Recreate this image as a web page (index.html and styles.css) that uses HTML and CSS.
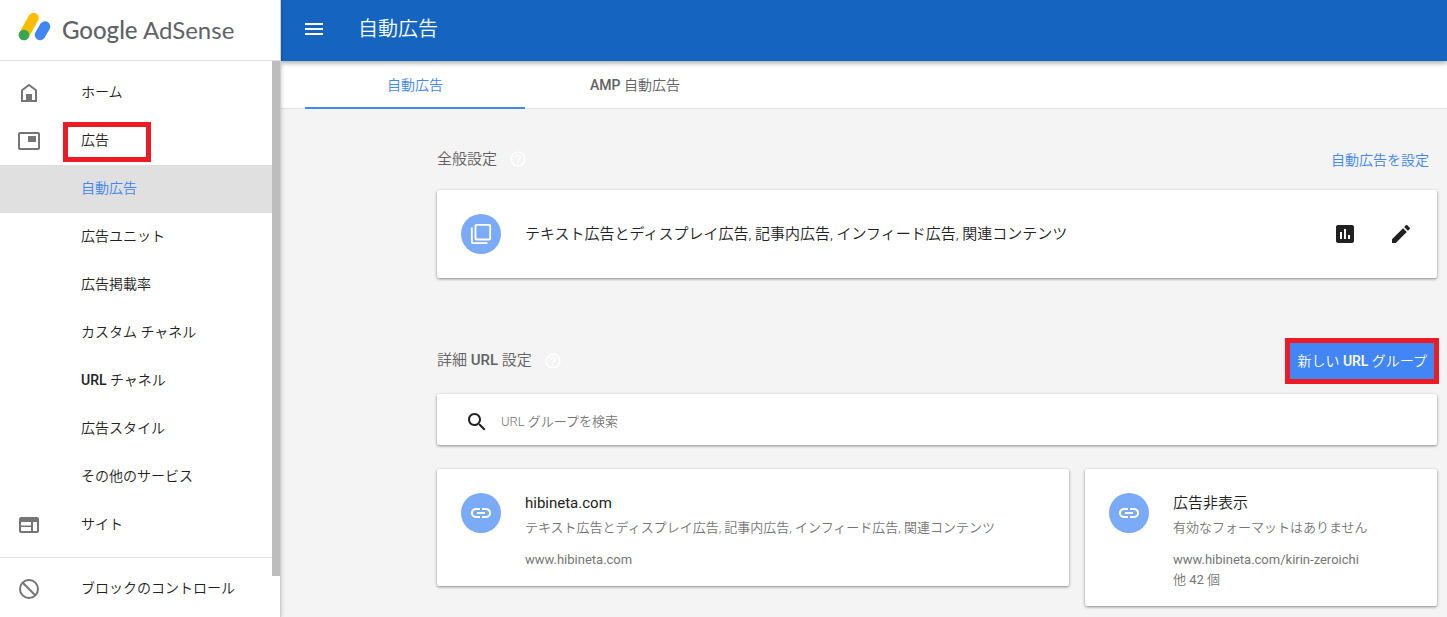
FILE: index.html
```html
<!DOCTYPE html>
<html lang="ja">
<head>
<meta charset="utf-8">
<title>自動広告 - Google AdSense</title>
<link rel="stylesheet" href="styles.css">
</head>
<body>
<svg class="defs" aria-hidden="true">
  <symbol id="help" viewBox="0 0 24 24"><path d="M11 18h2v-2h-2v2zm1-16C6.48 2 2 6.48 2 12s4.48 10 10 10 10-4.48 10-10S17.52 2 12 2zm0 18c-4.41 0-8-3.59-8-8s3.59-8 8-8 8 3.59 8 8-3.59 8-8 8zm0-14c-2.21 0-4 1.79-4 4h2c0-1.1.9-2 2-2s2 .9 2 2c0 2-3 1.75-3 5h2c0-2.25 3-2.5 3-5 0-2.21-1.79-4-4-4z"/></symbol>
  <symbol id="link" viewBox="0 0 24 24"><path d="M3.9 12c0-1.71 1.39-3.1 3.1-3.1h4V7H7c-2.76 0-5 2.24-5 5s2.24 5 5 5h4v-1.9H7c-1.71 0-3.1-1.39-3.1-3.1zM8 13h8v-2H8v2zm9-6h-4v1.9h4c1.71 0 3.1 1.39 3.1 3.1s-1.39 3.1-3.1 3.1h-4V17h4c2.76 0 5-2.24 5-5s-2.24-5-5-5z"/></symbol>
</svg>
<div class="app">
  <aside class="sidebar">
    <div class="brand">
      <svg class="brand-mark" viewBox="0 0 34 32" aria-hidden="true">
        <path d="M7 25L16.500 8" stroke="#fbbc04" stroke-width="10.500" stroke-linecap="round"/>
        <path d="M23 25L28 16.500" stroke="#4285f4" stroke-width="10.500" stroke-linecap="round"/>
        <circle cx="7" cy="25" r="5.300" fill="#34a853"/>
      </svg>
      <span class="brand-name"><b>Google</b> AdSense</span>
    </div>
    <div class="nav-scroll">
      <nav class="nav">
        <a class="nav-item" href="#"><svg class="icon" viewBox="0 0 24 24"><path d="M5 20V9.200L12 4l7 5.200V20z" fill="none" stroke="currentColor" stroke-width="2"/><path d="M9 13h6v8H9z"/></svg><span>ホーム</span></a>
        <a class="nav-item marked" href="#"><svg class="icon" viewBox="0 0 24 24"><rect x="2" y="4" width="20" height="16" rx="1" fill="none" stroke="currentColor" stroke-width="2"/><path d="M11 7h8v6h-8z"/></svg><span>広告</span></a>
        <a class="nav-item sub active" href="#">自動広告</a>
        <a class="nav-item sub" href="#">広告ユニット</a>
        <a class="nav-item sub" href="#">広告掲載率</a>
        <a class="nav-item sub" href="#">カスタム チャネル</a>
        <a class="nav-item sub" href="#"><span><span class="latin">URL</span> チャネル</span></a>
        <a class="nav-item sub" href="#">広告スタイル</a>
        <a class="nav-item sub" href="#">その他のサービス</a>
        <a class="nav-item" href="#"><svg class="icon" viewBox="0 0 24 24"><path fill-rule="evenodd" d="M4 4h16a2 2 0 0 1 2 2v12a2 2 0 0 1-2 2H4a2 2 0 0 1-2-2V6a2 2 0 0 1 2-2zM4 9v3.500h10V9zM4 14v4h10v-4zM16 9v9h4V9z"/></svg><span>サイト</span></a>
        <hr class="divider">
        <a class="nav-item" href="#"><svg class="icon" viewBox="0 0 24 24"><path d="M5.500 5.500l13 13" stroke="currentColor" stroke-width="2"/><circle cx="12" cy="12" r="9" fill="none" stroke="currentColor" stroke-width="2"/></svg><span>ブロックのコントロール</span></a>
      </nav>
      <div class="scroll-track"><div class="scroll-thumb"></div></div>
    </div>
  </aside>
  <div class="main">
    <header class="topbar">
      <button class="icon-btn" type="button" aria-label="メニュー"><svg class="icon" viewBox="0 0 24 24"><path d="M3 18h18v-2H3v2zm0-5h18v-2H3v2zm0-7v2h18V6H3z"/></svg></button>
      <h1 class="page-title">自動広告</h1>
    </header>
    <nav class="tabs">
      <a class="tab active" href="#">自動広告</a>
      <a class="tab" href="#"><span><span class="latin">AMP</span> 自動広告</span></a>
    </nav>
    <main class="content">
      <section>
        <div class="section-head">
          <h2 class="section-title">全般設定</h2>
          <svg class="help"><use href="#help"/></svg>
          <a class="setup-link" href="#">自動広告を設定</a>
        </div>
        <div class="card summary">
          <span class="avatar"><svg class="avatar-copy" viewBox="0 0 24 24"><path d="M3 5H1v16c0 1.100.9 2 2 2h16v-2H3V5zm18-4H7c-1.100 0-2 .9-2 2v14c0 1.100.9 2 2 2h14c1.100 0 2-.9 2-2V3c0-1.100-.9-2-2-2zm0 16H7V3h14v14z"/></svg></span>
          <p class="card-title grow">テキスト広告とディスプレイ広告, 記事内広告, インフィード広告, 関連コンテンツ</p>
          <button class="icon-btn" type="button" aria-label="レポート"><svg class="icon" viewBox="0 0 24 24"><path d="M19 3H5c-1.100 0-2 .9-2 2v14c0 1.100.9 2 2 2h14c1.100 0 2-.9 2-2V5c0-1.100-.9-2-2-2zM9 17H7v-7h2v7zm4 0h-2V7h2v10zm4 0h-2v-4h2v4z"/></svg></button>
          <button class="icon-btn" type="button" aria-label="編集"><svg class="icon" viewBox="0 0 24 24"><path d="M3 17.250V21h3.750L17.810 9.940l-3.750-3.750L3 17.250zM20.710 7.040c.39-.39.39-1.020 0-1.410l-2.340-2.340c-.39-.39-1.020-.39-1.410 0l-1.830 1.830 3.750 3.750 1.830-1.830z"/></svg></button>
        </div>
      </section>
      <section class="url-section">
        <div class="section-head">
          <h2 class="section-title">詳細 <span class="latin">URL</span> 設定</h2>
          <svg class="help"><use href="#help"/></svg>
          <button class="new-group" type="button">新しい <span class="latin">URL</span> グループ</button>
        </div>
        <label class="card search">
          <svg class="icon" viewBox="0 0 24 24" aria-hidden="true"><path d="M15.500 14h-.79l-.28-.27C15.410 12.590 16 11.110 16 9.500 16 5.910 13.090 3 9.500 3S3 5.910 3 9.500 5.910 16 9.500 16c1.610 0 3.090-.59 4.230-1.570l.27.28v.79l5 4.990L20.490 19l-4.990-5zm-6 0C7.010 14 5 11.990 5 9.500S7.010 5 9.500 5 14 7.010 14 9.500 11.990 14 9.500 14z"/></svg>
          <input class="search-input" type="text" placeholder="URL グループを検索" aria-label="URL グループを検索">
        </label>
        <div class="groups">
          <article class="card group">
            <span class="avatar"><svg class="icon"><use href="#link"/></svg></span>
            <div>
              <h3 class="card-title regular">hibineta.com</h3>
              <p class="formats">テキスト広告とディスプレイ広告, 記事内広告, インフィード広告, 関連コンテンツ</p>
              <p class="urls regular">www.hibineta.com</p>
            </div>
          </article>
          <article class="card group">
            <span class="avatar"><svg class="icon"><use href="#link"/></svg></span>
            <div>
              <h3 class="card-title">広告非表示</h3>
              <p class="formats">有効なフォーマットはありません</p>
              <p class="urls"><span class="regular">www.hibineta.com/kirin-zeroichi</span><br>他 <span class="regular">42</span> 個</p>
            </div>
          </article>
        </div>
      </section>
    </main>
  </div>
</div>
</body>
</html>
```
FILE: styles.css
```css
*, *::before, *::after { box-sizing: border-box; }
body {
  margin: 0;
  font-family: Roboto, "Noto Sans CJK JP", sans-serif;
  font-size: 14px;
  font-weight: 350;
  color: #212121;
  background: #f4f4f4;
}
h1, h2, h3, p { margin: 0; font-weight: inherit; }
a { text-decoration: none; color: inherit; }
button { font: inherit; border: 0; padding: 0; background: none; color: inherit; cursor: pointer; }
.defs { display: none; }
.latin { font-weight: 500; }
.regular { font-weight: 400; }
.icon { width: 24px; height: 24px; flex: none; display: block; fill: currentColor; }
.app { display: flex; height: 100vh; overflow: hidden; }

/* Sidebar */
.sidebar {
  width: 281px;
  flex: none;
  display: flex;
  flex-direction: column;
  background: #fff;
  border-right: 1px solid #d0d0d0;
  box-shadow: 0 0 4px rgba(0, 0, 0, .25);
  z-index: 1;
}
.brand {
  height: 61px;
  flex: none;
  display: flex;
  align-items: center;
  gap: 11px;
  padding-left: 17px;
  border-bottom: 1px solid #e0e0e0;
}
.brand-mark { width: 34px; height: 32px; margin-bottom: 8px; fill: none; }
.brand-name { font-family: Lato, sans-serif; font-size: 24px; line-height: 32px; font-weight: 400; color: #5f6368; }
.brand-name b { font-weight: 500; }
.nav-scroll { flex: 1; min-height: 0; display: flex; overflow: hidden; }
.nav { flex: 1; padding-top: 8px; }
.scroll-track { width: 8px; }
.scroll-thumb { height: 515px; background: #bdbdbd; }
.nav-item {
  position: relative;
  display: flex;
  align-items: center;
  gap: 40px;
  height: 48px;
  padding-left: 17px;
  padding-bottom: 4px;
}
.nav-item .icon { color: #757575; margin-top: 4px; }
.nav-item.sub { padding-left: 81px; }
.nav-item.active { background: #e0e0e0; color: #4285f4; }
.marked::after {
  content: "";
  position: absolute;
  left: 63px;
  top: 5px;
  width: 88px;
  height: 40px;
  border: 5px solid #ed1c24;
}
.divider { margin: 8px 0 7px; border: 0; border-top: 1px solid #e0e0e0; }

/* Header and tabs */
.main { flex: 1; min-width: 0; }
.topbar {
  position: relative;
  height: 61px;
  display: flex;
  align-items: center;
  gap: 32px;
  padding: 0 21px 4px;
  color: #fff;
  background: #1565c0;
  box-shadow: 0 2px 5px rgba(0, 0, 0, .35);
}
.page-title { font-size: 20px; line-height: 28px; }
.tabs { display: flex; height: 48px; padding-left: 24px; background: #fff; border-bottom: 1px solid #e0e0e0; }
.tab {
  width: 220px;
  height: 48px;
  display: flex;
  align-items: center;
  justify-content: center;
  color: #616161;
  border-bottom: 2px solid transparent;
}
.tab.active { color: #4285f4; border-color: #4285f4; }

/* Content */
.content { padding: 32px 10px 11px 156px; }
.section-head { display: flex; align-items: center; height: 36px; margin-bottom: 13px; }
.url-section { margin-top: 65px; }
.url-section .section-head { margin-bottom: 15px; }
.url-section .section-title { padding-bottom: 2px; }
.section-title { font-size: 15px; line-height: 20px; color: #616161; }
.help { width: 18px; height: 18px; margin-left: 12px; fill: #fff; }
.setup-link { margin-left: auto; padding-right: 8px; color: #4285f4; }
.new-group {
  margin: 0 3px 0 auto;
  height: 36px;
  padding: 0 7px 2px;
  color: #fff;
  background: #4285f4;
  outline: 5px solid #ed1c24;
}
.card { background: #fff; border-radius: 2px; box-shadow: 0 1px 3px rgba(0, 0, 0, .45); }
.summary { display: flex; align-items: center; gap: 32px; padding: 24px; }
.grow { flex: 1; margin-left: -8px; }
.avatar {
  width: 40px;
  height: 40px;
  flex: none;
  display: flex;
  align-items: center;
  justify-content: center;
  border-radius: 50%;
  color: #fff;
  background: #7baaf7;
}
.avatar-copy { width: 22px; height: 22px; fill: currentColor; }
.card-title { font-size: 15px; line-height: 20px; }
.search { display: flex; align-items: center; gap: 12px; height: 51px; padding: 4px 28px 0; }
.search-input {
  flex: 1;
  border: 0;
  padding: 0;
  outline: 0;
  background: none;
  font: inherit;
  font-size: 13px;
  color: #212121;
}
.search-input::placeholder { color: #757575; opacity: 1; }
.groups { display: grid; grid-template-columns: 1fr 352px; align-items: start; gap: 16px; margin-top: 24px; }
.group { display: flex; gap: 24px; padding: 24px 24px 16px; }
.formats { font-size: 13px; line-height: 20px; margin-top: 5px; color: #757575; }
.urls { font-size: 13px; line-height: 20px; margin-top: 12px; color: #757575; }
```
